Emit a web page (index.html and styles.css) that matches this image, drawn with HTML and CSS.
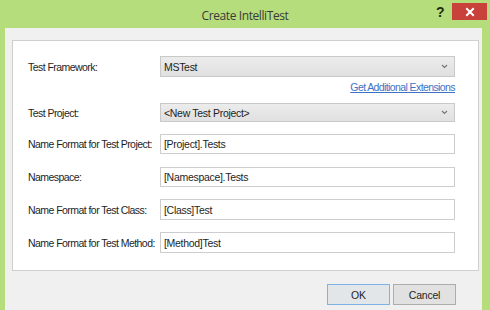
FILE: index.html
```html
<!DOCTYPE html>
<html lang="en">
<head>
    <meta charset="UTF-8">
    <title>Create IntelliTest</title>
    <link rel="stylesheet" href="styles.css">
</head>
<body>

    <div class="window">
        <div class="titlebar">
            <span class="title">Create IntelliTest</span>
            <span class="help-btn">?</span>
            <span class="close-btn">
                <svg width="10" height="10" viewBox="0 0 10 10">
                    <path d="M2 2 L8 8 M8 2 L2 8" stroke="#fff" stroke-width="2" stroke-linecap="square"/>
                </svg>
            </span>
        </div>

        <div class="content">
            <div class="panel">
                <div class="row row-framework">
                    <label>Test Framework:</label>
                    <div class="select">
                        <span>MSTest</span>
                        <svg class="chevron" width="7" height="5" viewBox="0 0 7 5"><path d="M1 1 L3.5 3.5 L6 1" fill="none" stroke="#777" stroke-width="1.2"/></svg>
                    </div>
                </div>
                <div class="link-row"><a href="#">Get Additional Extensions</a></div>
                <div class="row row-project">
                    <label>Test Project:</label>
                    <div class="select">
                        <span>&lt;New Test Project&gt;</span>
                        <svg class="chevron" width="7" height="5" viewBox="0 0 7 5"><path d="M1 1 L3.5 3.5 L6 1" fill="none" stroke="#777" stroke-width="1.2"/></svg>
                    </div>
                </div>
                <div class="row">
                    <label>Name Format for Test Project:</label>
                    <div class="input">[Project].Tests</div>
                </div>
                <div class="row">
                    <label>Namespace:</label>
                    <div class="input">[Namespace].Tests</div>
                </div>
                <div class="row">
                    <label>Name Format for Test Class:</label>
                    <div class="input tall">[Class]Test</div>
                </div>
                <div class="row">
                    <label>Name Format for Test Method:</label>
                    <div class="input tall">[Method]Test</div>
                </div>
            </div>

            <div class="footer">
                <button class="ok-btn">OK</button>
                <button>Cancel</button>
            </div>
        </div>
    </div>

</body>
</html>
```

FILE: styles.css
```css
body {
    margin: 0;
    padding: 0;
    background-color: #f0f0f0;
    font-family: 'Liberation Sans', Arial, sans-serif;
}
.window {
    width: 490px;
    height: 310px;
    background-color: #b6dd7b;
    display: flex;
    flex-direction: column;
}
.titlebar {
    height: 28px;
    position: relative;
    display: flex;
    justify-content: center;
    align-items: center;
}
.title {
    font-family: 'Open Sans', sans-serif;
    font-size: 12px;
    color: #3a3a3a;
    letter-spacing: -0.4px;
    margin-top: 2px;
}
.help-btn {
    position: absolute;
    left: 436px;
    top: 4px;
    font-weight: bold;
    font-size: 14px;
    color: #1f2a12;
}
.close-btn {
    position: absolute;
    left: 452px;
    top: 3px;
    width: 35px;
    height: 17px;
    background-color: #c9413b;
    display: flex;
    justify-content: center;
    align-items: center;
}
.content {
    flex: 1;
    margin: 0 8px 0 5px;
    background-color: #f0f0f0;
    padding: 12px 3px 0 7px;
}
.panel {
    background-color: #fff;
    border: 1px solid #cfcfcf;
    padding: 15px 23px 17px 15px;
}
.row {
    display: flex;
    align-items: center;
    margin-top: 12px;
}
.row:nth-child(5) {
    margin-top: 13px;
}
.row-framework {
    margin-top: 0;
}
.row-project {
    margin-top: 9px;
}
label {
    width: 132px;
    flex-shrink: 0;
    white-space: nowrap;
    font-size: 10.5px;
    letter-spacing: -0.55px;
    color: #1e1e1e;
}
.select {
    flex: 1;
    height: 19px;
    border: 1px solid #c9c9c9;
    background: linear-gradient(#ececec, #e0e0e0);
    display: flex;
    align-items: center;
    justify-content: space-between;
    padding: 0 6px 0 3px;
    font-size: 10.5px;
    letter-spacing: -0.3px;
    color: #1e1e1e;
}
.row-project .select {
    height: 17px;
}
.input {
    flex: 1;
    height: 18px;
    border: 1px solid #cdcdcd;
    background-color: #fff;
    display: flex;
    align-items: center;
    padding: 0 3px;
    font-size: 10.5px;
    letter-spacing: -0.3px;
    color: #1e1e1e;
}
.input.tall {
    height: 19px;
}
.link-row {
    display: flex;
    justify-content: flex-end;
    margin-top: 3px;
    height: 14px;
}
.link-row a {
    font-size: 10.5px;
    letter-spacing: -0.6px;
    color: #3d72c6;
    line-height: 14px;
}
.footer {
    display: flex;
    justify-content: flex-end;
    gap: 3px;
    margin-top: 13px;
    padding-right: 23px;
}
button {
    width: 63px;
    height: 21px;
    border: 1px solid #adadad;
    background-color: #e1e1e1;
    font-family: 'Liberation Sans', Arial, sans-serif;
    font-size: 10.5px;
    letter-spacing: -0.2px;
    color: #1e1e1e;
    padding: 0;
}
.ok-btn {
    border-color: #7fb3e3;
    background-color: #e3e6e9;
}
```
